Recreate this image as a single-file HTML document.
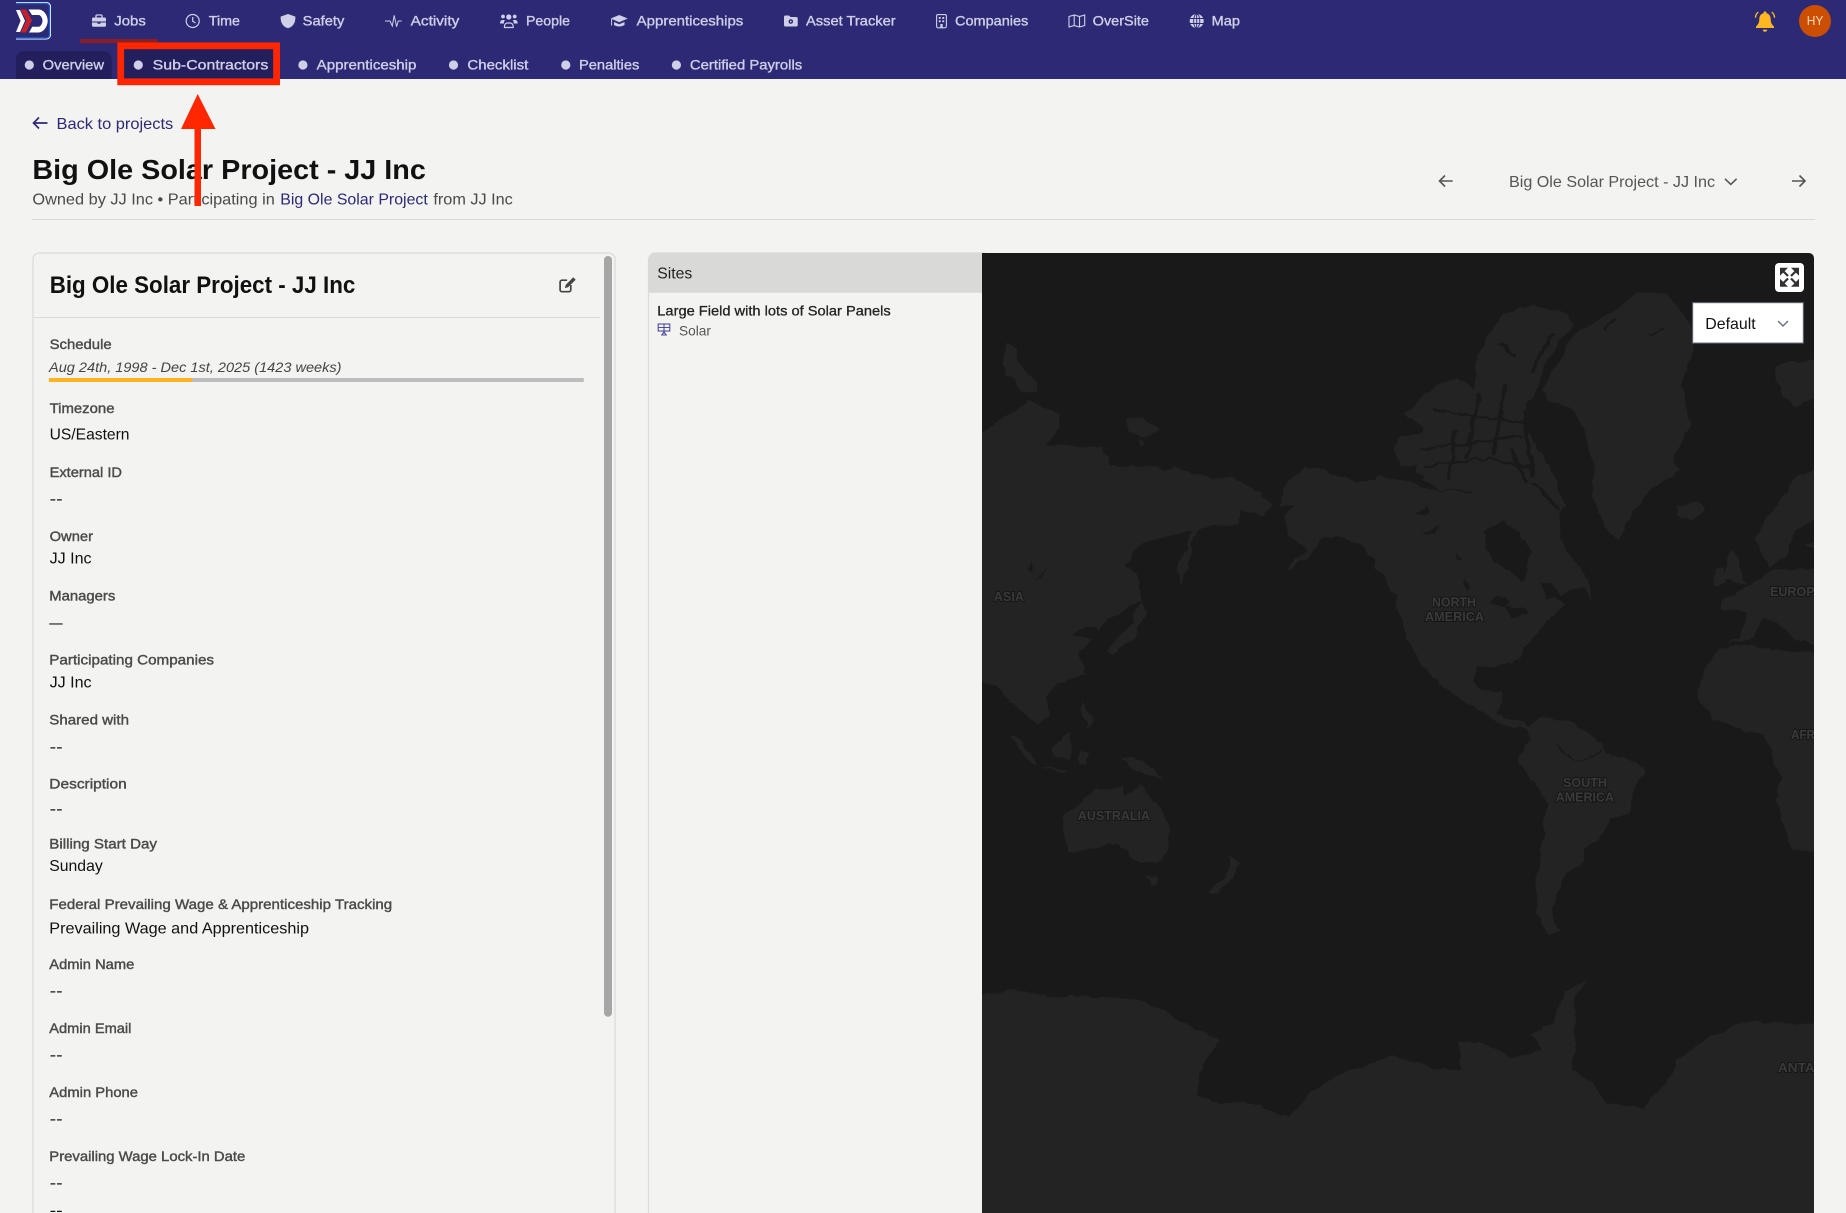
<!DOCTYPE html>
<html lang="en">
<head>
<meta charset="utf-8">
<title>Big Ole Solar Project - JJ Inc</title>
<style>
html,body{margin:0;padding:0;background:#f3f3f1;width:1846px;height:1213px;overflow:hidden}
svg{display:block}
text{font-family:"Liberation Sans",Arial,sans-serif;white-space:pre;transform:translateY(-.5px)}
.n{font-size:14px;fill:#cfcfe8;stroke:#cfcfe8;stroke-width:.35}
.l{font-size:14px;fill:#4a4a4a;stroke:#4a4a4a;stroke-width:.4}
.v{font-size:16px;fill:#111}
.s{font-size:16px;fill:#4a4a4a}
.m{font-size:13px;fill:#3a3a3a;stroke:#161616;stroke-width:2px;paint-order:stroke;font-weight:700}
.land{fill:#232323}
.sea{fill:#191919}
</style>
</head>
<body>
<svg xmlns="http://www.w3.org/2000/svg" width="1846" height="1213" viewBox="0 0 1846 1213">
<defs>
  <clipPath id="mapclip"><path d="M982 253H1809a5 5 0 0 1 5 5V1213H982z"/></clipPath>
  <clipPath id="logoclip"><rect x="16" y="0" width="40" height="42"/></clipPath>
  <filter id="rough" x="-3%" y="-3%" width="106%" height="106%" color-interpolation-filters="sRGB">
    <feTurbulence type="fractalNoise" baseFrequency=".07" numOctaves="3" seed="4" result="t"/>
    <feDisplacementMap in="SourceGraphic" in2="t" scale="8" xChannelSelector="R" yChannelSelector="G"/>
  </filter>
</defs>
<rect width="1846" height="1213" fill="#f3f3f1"/>

<!-- Top navigation -->
<rect width="1846" height="79" fill="#2d2a75"/>
<g clip-path="url(#logoclip)">
  <rect x="11" y="2.500" width="39.500" height="36.500" rx="4" fill="#2d2a75" stroke="#ffffff" stroke-width="1"/>
  <rect x="11" y="3.500" width="38.500" height="34.500" rx="3.500" fill="none" stroke="#1b5cc8" stroke-width="1.400"/>
  <path d="M16 10h4l5 10.700-5 11.300h-4l4.600-11.200z" fill="#fff"/>
  <path d="M20.500 9.500h5.500l6 11-6 12h-5.500l6-12z" fill="#c4212b"/>
  <path d="M28.500 9.500h10c5 0 9.200 5.500 9.200 11.200 0 5.700-4.200 11.800-9.700 11.800H29l3.200-5.800h6.300c2.200 0 4-3.400 4-6 0-2.700-1.800-5.700-4-5.700h-6.500z" fill="#fff"/>
</g>

<rect x="80" y="39" width="77.700" height="4" fill="#8c1d24"/>

<!-- nav icons -->
<g fill="#cfcfe8">
  <path d="M92 19a1.500 1.500 0 0 1 1.500-1.500h11a1.500 1.500 0 0 1 1.500 1.500v2.500H92z"/>
  <path d="M92 22.500h5.500v1.200h3v-1.200h5.500v3a1.200 1.200 0 0 1-1.200 1.200H93.200a1.200 1.200 0 0 1-1.200-1.200z"/>
  <path d="M96 17.500V16a1 1 0 0 1 1-1h4a1 1 0 0 1 1 1v1.500" fill="none" stroke="#cfcfe8" stroke-width="1.300"/>
  <circle cx="192.700" cy="21" r="6.500" fill="none" stroke="#cfcfe8" stroke-width="1.200"/>
  <path d="M192.700 17v4.300l2.800 1.600" fill="none" stroke="#cfcfe8" stroke-width="1.200"/>
  <path d="M288 14l7.400 2.600c0 6-1.600 9.600-7.400 11.700-5.800-2.100-7.400-5.700-7.400-11.700z"/>
  <polyline points="385,21 390,21 392.300,26 394.200,15.300 396.600,26.800 398.200,21 401.700,21" fill="none" stroke="#cfcfe8" stroke-width="1"/>
  <circle cx="508.800" cy="17" r="2.600"/>
  <circle cx="503" cy="16.500" r="1.900"/>
  <circle cx="514.700" cy="16.500" r="1.900"/>
  <path d="M500 23.500c0-2 1-3.500 2.500-3.500h2.500c-.8 1-1.200 2.200-1 3.500zM517.700 23.500c0-2-1-3.500-2.500-3.500h-2.500c.8 1 1.200 2.200 1 3.500z"/>
  <path d="M504.500 27.500V26a3 3 0 0 1 3-3h2.600a3 3 0 0 1 3 3v1.500z" fill="none" stroke="#cfcfe8" stroke-width="1.200"/>
  <path d="M619.200 15l8.500 3.500-8.500 3.700-8.500-3.700z"/>
  <path d="M614 22v3c3 2 7.500 2 10.500 0v-3l-5.300 2.200z"/>
  <path d="M611.600 19v6.500" stroke="#cfcfe8" stroke-width="1" fill="none"/>
  <path d="M784 17a1.500 1.500 0 0 1 1.500-1.500H789l1.500 1.500h5.700a1.500 1.500 0 0 1 1.500 1.500v6.500a1.500 1.500 0 0 1-1.500 1.500h-10.700a1.500 1.500 0 0 1-1.500-1.500z"/>
  <circle cx="790.800" cy="21.500" r="2.300" fill="#2d2a75"/>
  <circle cx="790.800" cy="21.500" r=".9"/>
  <rect x="936.600" y="14.600" width="9.800" height="13.200" rx="1.500" fill="none" stroke="#cfcfe8" stroke-width="1.100"/>
  <rect x="938.800" y="17" width="1.900" height="1.900"/><rect x="942.300" y="17" width="1.900" height="1.900"/>
  <rect x="938.800" y="20.300" width="1.900" height="1.900"/><rect x="942.300" y="20.300" width="1.900" height="1.900"/>
  <rect x="940.300" y="24" width="2.400" height="3.500"/>
  <path d="M1069 16.500l5.200-1.500 5.300 1.500 5.200-1.500v10.500l-5.200 1.500-5.300-1.500-5.200 1.500zM1074.200 15v10.500M1079.500 16.500V27" fill="none" stroke="#cfcfe8" stroke-width="1.100"/>
  <circle cx="1196.700" cy="21" r="7"/>
  <path d="M1189.700 18.500h14M1189.700 23.500h14M1196.700 14v14" stroke="#2d2a75" stroke-width=".9" fill="none"/>
  <ellipse cx="1196.700" cy="21" rx="3.100" ry="7" fill="none" stroke="#2d2a75" stroke-width=".9"/>
</g>

<text class="n" x="114.300" y="26" textLength="31.500" lengthAdjust="spacingAndGlyphs">Jobs</text>
<text class="n" x="208.800" y="26" textLength="31.200" lengthAdjust="spacingAndGlyphs">Time</text>
<text class="n" x="302.700" y="26" textLength="41.600" lengthAdjust="spacingAndGlyphs">Safety</text>
<text class="n" x="410.700" y="26" textLength="48.600" lengthAdjust="spacingAndGlyphs">Activity</text>
<text class="n" x="526" y="26" textLength="44" lengthAdjust="spacingAndGlyphs">People</text>
<text class="n" x="636.700" y="26" textLength="106.600" lengthAdjust="spacingAndGlyphs">Apprenticeships</text>
<text class="n" x="806" y="26" textLength="89.700" lengthAdjust="spacingAndGlyphs">Asset Tracker</text>
<text class="n" x="955" y="26" textLength="73.300" lengthAdjust="spacingAndGlyphs">Companies</text>
<text class="n" x="1092.700" y="26" textLength="56.300" lengthAdjust="spacingAndGlyphs">OverSite</text>
<text class="n" x="1211.700" y="26" textLength="28.300" lengthAdjust="spacingAndGlyphs">Map</text>

<!-- Bell -->
<g fill="#ffb81f">
  <path d="M1765 13c-3.600 0-5.700 2.700-5.700 6.100 0 3.700-1.300 5.500-3.300 7.500v1.400h18v-1.400c-2-2-3.300-3.800-3.300-7.500 0-3.400-2.100-6.100-5.700-6.100z"/>
  <circle cx="1765" cy="12.800" r="1.400"/>
  <path d="M1762.800 29.600h4.400a2.200 2.100 0 0 1-4.400 0z"/>
  <path d="M1757.900 12.500c-1.300 1-2.200 2.700-2.400 4.700M1772.100 12.500c1.300 1 2.200 2.700 2.400 4.700" fill="none" stroke="#ffb81f" stroke-width="1.400" stroke-linecap="round"/>
</g>
<!-- Avatar -->
<circle cx="1815" cy="21" r="16" fill="#cc4e00"/>
<text x="1806.700" y="25.700" font-size="13" fill="#fbd9b8" textLength="16.700" lengthAdjust="spacingAndGlyphs">HY</text>

<!-- Sub navigation -->
<path d="M16 79V59a8 8 0 0 1 8-8h79.700a8 8 0 0 1 8 8v20z" fill="#221f5c"/>
<rect x="124" y="49" width="149" height="30" fill="#221f5c"/>
<g fill="#cfcfe8">
  <circle cx="29.300" cy="65" r="4.600"/><circle cx="138.300" cy="65" r="4.600"/>
  <circle cx="302.900" cy="65" r="4.600"/><circle cx="453.500" cy="65" r="4.600"/>
  <circle cx="565.800" cy="65" r="4.600"/><circle cx="676.400" cy="65" r="4.600"/>
</g>
<text class="n" x="42.700" y="70" textLength="61.300" lengthAdjust="spacingAndGlyphs">Overview</text>
<text class="n" x="152.700" y="70" textLength="115.600" lengthAdjust="spacingAndGlyphs">Sub-Contractors</text>
<text class="n" x="316.700" y="70" textLength="99.700" lengthAdjust="spacingAndGlyphs">Apprenticeship</text>
<text class="n" x="467.400" y="70" textLength="60.900" lengthAdjust="spacingAndGlyphs">Checklist</text>
<text class="n" x="579" y="70" textLength="60.300" lengthAdjust="spacingAndGlyphs">Penalties</text>
<text class="n" x="689.900" y="70" textLength="112.300" lengthAdjust="spacingAndGlyphs">Certified Payrolls</text>

<!-- Page heading -->
<path d="M47.500 123H33.500M39 117.500L33.500 123l5.500 5.500" fill="none" stroke="#2d2a75" stroke-width="1.700"/>
<text x="56.500" y="129.500" font-size="16" fill="#2d2a75" textLength="116.700" lengthAdjust="spacingAndGlyphs">Back to projects</text>
<text x="32.400" y="179.300" font-size="28" font-weight="700" fill="#111" textLength="393.500" lengthAdjust="spacingAndGlyphs">Big Ole Solar Project - JJ Inc</text>
<text class="s" x="32.400" y="205" textLength="242.400" lengthAdjust="spacingAndGlyphs">Owned by JJ Inc • Participating in</text>
<text x="280.300" y="205" font-size="16" fill="#2d2a75" textLength="147.500" lengthAdjust="spacingAndGlyphs">Big Ole Solar Project</text>
<text class="s" x="433.400" y="205" textLength="79.400" lengthAdjust="spacingAndGlyphs">from JJ Inc</text>

<path d="M1452.700 181H1439.500M1445 175.500l-5.500 5.500 5.500 5.500" fill="none" stroke="#555" stroke-width="1.600"/>
<text x="1509" y="187.300" font-size="16" fill="#555" textLength="206" lengthAdjust="spacingAndGlyphs">Big Ole Solar Project - JJ Inc</text>
<path d="M1725 178.800l5.800 5.600 5.800-5.600" fill="none" stroke="#555" stroke-width="1.600"/>
<path d="M1792 181h13M1799.500 175.500l5.500 5.500-5.500 5.500" fill="none" stroke="#555" stroke-width="1.600"/>
<rect x="32" y="219" width="1783" height="1" fill="#d9d9d7"/>

<!-- Detail card -->
<path d="M33 1213V259a6 6 0 0 1 6-6H609a6 6 0 0 1 6 6V1213" fill="none" stroke="#dcdcda" stroke-width="1.300"/>
<rect x="33" y="317" width="567" height="1" fill="#dcdcda"/>
<rect x="604" y="256" width="8" height="760.700" rx="4" fill="#a6a6a6"/>
<text x="49.700" y="293.300" font-size="24" font-weight="700" fill="#111" textLength="305.600" lengthAdjust="spacingAndGlyphs">Big Ole Solar Project - JJ Inc</text>
<path d="M570.800 285v4.700a2 2 0 0 1-2 2h-6.700a2 2 0 0 1-2-2v-7.500a2 2 0 0 1 2-2h5" fill="none" stroke="#444" stroke-width="1.700"/>
<path d="M573.300 277.300l2.400 2.400-7.600 7.600-3.200.8.800-3.200z" fill="#444"/>

<text class="l" x="49.600" y="349.300" textLength="62.100" lengthAdjust="spacingAndGlyphs">Schedule</text>
<text x="49" y="372.700" font-size="14" font-style="italic" fill="#444" textLength="292.500" lengthAdjust="spacingAndGlyphs">Aug 24th, 1998 - Dec 1st, 2025 (1423 weeks)</text>
<rect x="48.900" y="378" width="535" height="4" rx="1" fill="#bdbdbd"/>
<rect x="48.900" y="378" width="143.100" height="4" fill="#fdb41f"/>

<text class="l" x="49.600" y="413.300" textLength="64.900" lengthAdjust="spacingAndGlyphs">Timezone</text>
<text class="v" x="49.600" y="440" textLength="79.900" lengthAdjust="spacingAndGlyphs">US/Eastern</text>
<text class="l" x="49.600" y="477.300" textLength="72.400" lengthAdjust="spacingAndGlyphs">External ID</text>
<text class="v" x="49.600" y="504.500" textLength="13.100" lengthAdjust="spacingAndGlyphs">--</text>
<text class="l" x="49.600" y="541.300" textLength="43.400" lengthAdjust="spacingAndGlyphs">Owner</text>
<text class="v" x="49.600" y="564" textLength="42" lengthAdjust="spacingAndGlyphs">JJ Inc</text>
<text class="l" x="49.300" y="601" textLength="66" lengthAdjust="spacingAndGlyphs">Managers</text>
<text class="v" x="49.300" y="628.500" textLength="13.400" lengthAdjust="spacingAndGlyphs">—</text>
<text class="l" x="49.300" y="665" textLength="164.700" lengthAdjust="spacingAndGlyphs">Participating Companies</text>
<text class="v" x="49.600" y="688" textLength="42" lengthAdjust="spacingAndGlyphs">JJ Inc</text>
<text class="l" x="49.300" y="725" textLength="79.700" lengthAdjust="spacingAndGlyphs">Shared with</text>
<text class="v" x="49.600" y="752.500" textLength="13.100" lengthAdjust="spacingAndGlyphs">--</text>
<text class="l" x="49.300" y="789" textLength="77.400" lengthAdjust="spacingAndGlyphs">Description</text>
<text class="v" x="49.600" y="814.500" textLength="13.100" lengthAdjust="spacingAndGlyphs">--</text>
<text class="l" x="49.300" y="849" textLength="107.700" lengthAdjust="spacingAndGlyphs">Billing Start Day</text>
<text class="v" x="49.300" y="871.700" textLength="53.400" lengthAdjust="spacingAndGlyphs">Sunday</text>
<text class="l" x="49.300" y="909.300" textLength="342.900" lengthAdjust="spacingAndGlyphs">Federal Prevailing Wage &amp; Apprenticeship Tracking</text>
<text class="v" x="49.300" y="934" textLength="259.700" lengthAdjust="spacingAndGlyphs">Prevailing Wage and Apprenticeship</text>
<text class="l" x="49.300" y="969.300" textLength="85" lengthAdjust="spacingAndGlyphs">Admin Name</text>
<text class="v" x="49.600" y="996.500" textLength="13.100" lengthAdjust="spacingAndGlyphs">--</text>
<text class="l" x="49.300" y="1033.300" textLength="82.100" lengthAdjust="spacingAndGlyphs">Admin Email</text>
<text class="v" x="49.600" y="1060.500" textLength="13.100" lengthAdjust="spacingAndGlyphs">--</text>
<text class="l" x="49.300" y="1097.300" textLength="88.700" lengthAdjust="spacingAndGlyphs">Admin Phone</text>
<text class="v" x="49.600" y="1124.500" textLength="13.100" lengthAdjust="spacingAndGlyphs">--</text>
<text class="l" x="49.300" y="1161.300" textLength="196" lengthAdjust="spacingAndGlyphs">Prevailing Wage Lock-In Date</text>
<text class="v" x="49.600" y="1188.500" textLength="13.100" lengthAdjust="spacingAndGlyphs">--</text>
<text class="v" x="49.600" y="1216" textLength="13.100" lengthAdjust="spacingAndGlyphs">--</text>

<!-- Sites panel -->
<path d="M648.500 1213V260a7 7 0 0 1 7-7H985" fill="none" stroke="#dcdcda" stroke-width="1.300"/>
<path d="M648.500 292.700V260a7.500 7.500 0 0 1 7.500-7.500H985v40.200z" fill="#d9d9d7"/>
<text x="657.300" y="279" font-size="16" fill="#222" textLength="35" lengthAdjust="spacingAndGlyphs">Sites</text>
<text x="657.300" y="316" font-size="14" fill="#222" stroke="#222" stroke-width=".3" textLength="233.400" lengthAdjust="spacingAndGlyphs">Large Field with lots of Solar Panels</text>
<g fill="none" stroke="#4f4ba0" stroke-width="1.100">
  <rect x="658.200" y="324" width="11.600" height="7"/>
  <path d="M664 324v9.500M658.200 327.500h11.600M661 335h6M664 331.500l-2 3.500M664 331.500l2 3.500"/>
</g>
<text x="679" y="336" font-size="14" fill="#555" textLength="32" lengthAdjust="spacingAndGlyphs">Solar</text>

<!-- Map -->
<g clip-path="url(#mapclip)">
  <rect x="982" y="253" width="832" height="960" fill="#191919"/>
  <g filter="url(#rough)">
  <rect x="940" y="220" width="900" height="1" fill="#191919"/>
  <g transform="translate(980,250) scale(.5523,.3333)">
    <g class="land">
      <!-- Asia -->
      <path d="M-30 600L30 510 60 490 88 450 110 470 145 490 145 530 118 585 170 590 222 592 235 640 290 650 370 662 420 680 470 692 510 730 530 760 510 795 472 780 465 822 400 832 385 880 375 950 365 1005 358 960 372 900 385 850 355 850 320 870 290 885 260 950 285 968 292 1050 250 1090 215 1140 190 1130 170 1150 200 1172 180 1210 190 1270 140 1300 120 1340 125 1400 100 1420 72 1372 30 1312 -30 1270Z"/>
      <path d="M45 280L65 300 72 350 100 390 104 422 78 425 42 350Z"/>
      <path d="M265 510L290 500 330 540 295 560 270 545Z"/>
      <path d="M295 1050L303 1085 282 1130 287 1152 240 1215 228 1205 270 1130 282 1090Z"/>
      <path d="M285 570l12 3 0 15-10 0z"/>
      <!-- North America -->
      <path d="M550 712L590 650 622 660 680 696 722 680 790 700 822 722 890 726 920 692 960 680 1000 722 1030 770 1050 800 1050 860 1062 900 1082 950 1100 990 1112 1052 1060 1062 1030 1110 1002 1160 975 1222 960 1242 900 1252 890 1290 905 1322 942 1320 946 1352 935 1390 985 1422 1000 1440 960 1432 880 1360 830 1302 790 1222 765 1130 750 1030 720 960 700 890 650 860 625 860 600 910 570 950 555 962 590 900 560 850 550 800 570 770 545 765Z"/>
      <!-- Arctic archipelago -->
      <path d="M760 555L800 550 800 640 760 650 752 600Z"/>
      <path d="M770 490L830 400 862 380 895 420 905 300 950 190 1005 165 1062 190 1075 230 1040 290 1015 380 985 480 985 520 1040 680 1060 770 1050 800 990 760 960 690 900 720 830 720 790 670 790 590 800 540Z"/>
      <!-- Greenland -->
      <path d="M1020 420L1072 258 1130 200 1190 128 1242 130 1287 220 1292 300 1270 400 1286 520 1255 640 1268 660 1230 700 1182 780 1160 872 1130 830 1110 740 1110 640 1095 540 1070 480 1030 450Z"/>
      <!-- Iceland -->
      <path d="M1262 772L1300 755 1312 782 1290 812 1265 795Z"/>
      <!-- Svalbard -->
      <path d="M1438 350L1480 332 1540 320 1540 420 1470 472 1450 420Z"/>
      <!-- Scandinavia -->
      <path d="M1540 630L1480 682 1442 760 1415 830 1405 870 1430 950 1460 920 1480 840 1540 772Z"/>
      <path d="M1540 868L1490 882 1540 930Z"/>
      <!-- UK / Ireland -->
      <path d="M1358 898L1370 930 1388 1005 1345 985 1350 950Z"/>
      <path d="M1330 960L1345 950 1350 1000 1330 1010Z"/>
      <!-- Europe -->
      <path d="M1540 950L1430 962 1390 1010 1350 1040 1340 1076 1390 1090 1375 1160 1350 1185 1400 1162 1420 1100 1450 1130 1480 1172 1540 1195Z"/>
      <!-- Africa -->
      <path d="M1540 1215L1400 1190 1340 1190 1310 1260 1298 1340 1330 1412 1420 1460 1450 1580 1440 1650 1470 1802 1540 1802Z"/>
    </g>
    <g class="sea">
      <path d="M910 845L950 810 975 850 996 900 992 960 978 1000 962 960 920 912Z"/>
      <path d="M1040 1042L1092 1010 1112 1052 1062 1062Z"/>
      <path d="M785 795l25-28 4 24zM800 850l32-24-10 24z"/>
      <path d="M925 1060l15-28 18 28-10 14zM950 1070l30 0 15 20-30 14-8-18z"/>
      <path d="M880 980l7 30-5 10-6-20zM862 905l7 24-6 5z"/>
      <path d="M1015 1000l20 0 18 40-28 8z"/>
      <path d="M92 935l-5 25 10 8z"/>
      <path d="M122 950l-22 42 10-4z"/>
    </g>
    <g fill="none" stroke="#191919" stroke-width="7">
      <path d="M795 600C850 590 920 570 985 560M805 650C850 630 900 620 940 635 970 645 990 650 1000 655M820 480C880 500 950 505 1000 520"/>
      <path d="M905 430C895 500 890 560 880 620M952 400C945 480 935 550 930 620M985 480C990 560 995 620 1000 680M970 320C955 305 950 295 940 280M1040 250C1020 290 1010 330 1000 370"/>
      <path d="M1000 700C1020 730 1035 755 1050 780M860 540C855 600 855 640 850 690M960 590C970 630 980 670 990 700"/>
      <path d="M1240 240l-30 10M1130 240l20 -30M1090 220l-30 50" stroke-width="5"/>
    </g>
  </g>
  <g transform="translate(980,700) scale(.5523,.3333)">
    <g class="land">
      <!-- South America -->
      <path d="M1020 55L1070 65 1125 130 1130 160 1195 190 1205 215 1185 260 1175 340 1140 360 1130 400 1095 450 1090 490 1060 520 1045 580 1035 640 1050 695 1030 705 1005 640 1010 540 1020 400 1028 310 990 220 975 180 995 120 990 90 1000 70Z"/>
      <!-- SE Asia islands -->
      <path d="M50 0L122 0 125 50 105 75 75 40Z"/>
      <path d="M55 105L78 125 105 195 92 195Z"/>
      <path d="M128 142L166 100 162 182 135 170Z"/>
      <path d="M178 150l20 10-5 30-15 0z"/>
      <path d="M255 165L300 190 332 236 280 215Z"/>
      <path d="M185 0l20 60-10 30-10-40z"/>
      <path d="M105 200l55 10 -10 8z"/>
      <!-- Australia -->
      <path d="M150 340L210 270 260 262 262 290 290 250 345 372 340 430 320 490 290 492 250 430 160 460 150 380Z"/>
      <path d="M304 525L320 530 318 552 308 550Z"/>
      <!-- New Zealand -->
      <path d="M448 465L470 490 460 525 430 582 415 575 442 530 455 500Z"/>
      <!-- Antarctica -->
      <path d="M-30 895L60 870 130 890 240 890 300 905 340 940 380 975 432 1020 402 1100 392 1180 410 1200 490 1215 560 1250 590 1190 640 1130 700 1095 745 1068 830 1105 870 1112 865 1030 900 1025 965 1075 1020 1050 1000 1000 1035 970 1060 880 1098 835 1075 900 1080 1030 1070 1110 1110 1150 1135 1210 1200 1225 1250 1130 1260 1085 1320 1010 1380 970 1450 965 1540 980 1540 1600 -30 1600Z"/>
    </g>
    <g fill="none" stroke="#191919" stroke-width="4">
      <path d="M1045 135c10 25 25 45 40 45 15 0 30-15 40-25"/>
    </g>
  </g>
  </g>
  <!-- map labels -->
  <text class="m" x="993.800" y="601.700" textLength="30.200" lengthAdjust="spacingAndGlyphs">ASIA</text>
  <text class="m" x="1432" y="607" textLength="44" lengthAdjust="spacingAndGlyphs">NORTH</text>
  <text class="m" x="1425" y="621.700" textLength="59" lengthAdjust="spacingAndGlyphs">AMERICA</text>
  <text class="m" x="1770" y="596.700" textLength="53" lengthAdjust="spacingAndGlyphs">EUROPE</text>
  <text class="m" x="1791" y="739.300" textLength="44" lengthAdjust="spacingAndGlyphs">AFRICA</text>
  <text class="m" x="1563" y="787.700" textLength="44" lengthAdjust="spacingAndGlyphs">SOUTH</text>
  <text class="m" x="1555.700" y="802" textLength="58.300" lengthAdjust="spacingAndGlyphs">AMERICA</text>
  <text class="m" x="1077.800" y="820.700" textLength="72.200" lengthAdjust="spacingAndGlyphs">AUSTRALIA</text>
  <text class="m" x="1778" y="1072.700" textLength="88" lengthAdjust="spacingAndGlyphs">ANTARCTICA</text>
</g>

<!-- Map controls -->
<rect x="1775" y="263" width="29" height="29" rx="4" fill="#fff"/>
<g fill="#333" stroke="#333" stroke-width="1">
  <path d="M1780.500 268.200h6.300l-6.300 6.300z"/><path d="M1783 271l5 5" stroke-width="2.200"/>
  <path d="M1798.500 268.200h-6.300l6.300 6.300z"/><path d="M1796 271l-5 5" stroke-width="2.200"/>
  <path d="M1780.500 286.300h6.300l-6.300-6.300z"/><path d="M1783 283.500l5-5" stroke-width="2.200"/>
  <path d="M1798.500 286.300h-6.300l6.300-6.300z"/><path d="M1796 283.500l-5-5" stroke-width="2.200"/>
</g>
<rect x="1692.700" y="302.700" width="110.600" height="40.300" fill="#fff" stroke="#6b7280" stroke-width="1"/>
<text x="1705.300" y="329.300" font-size="16" fill="#111" textLength="50.400" lengthAdjust="spacingAndGlyphs">Default</text>
<path d="M1778 321l5 5 5-5" fill="none" stroke="#6b7280" stroke-width="1.500"/>

<!-- Annotation -->
<rect x="120.700" y="45.800" width="155.900" height="36" fill="none" stroke="#ff2600" stroke-width="6.800"/>
<rect x="194.500" y="125" width="6.500" height="81" fill="#ff2600"/>
<path d="M197.700 94L215.500 129H181z" fill="#ff2600"/>
</svg>
</body>
</html>
